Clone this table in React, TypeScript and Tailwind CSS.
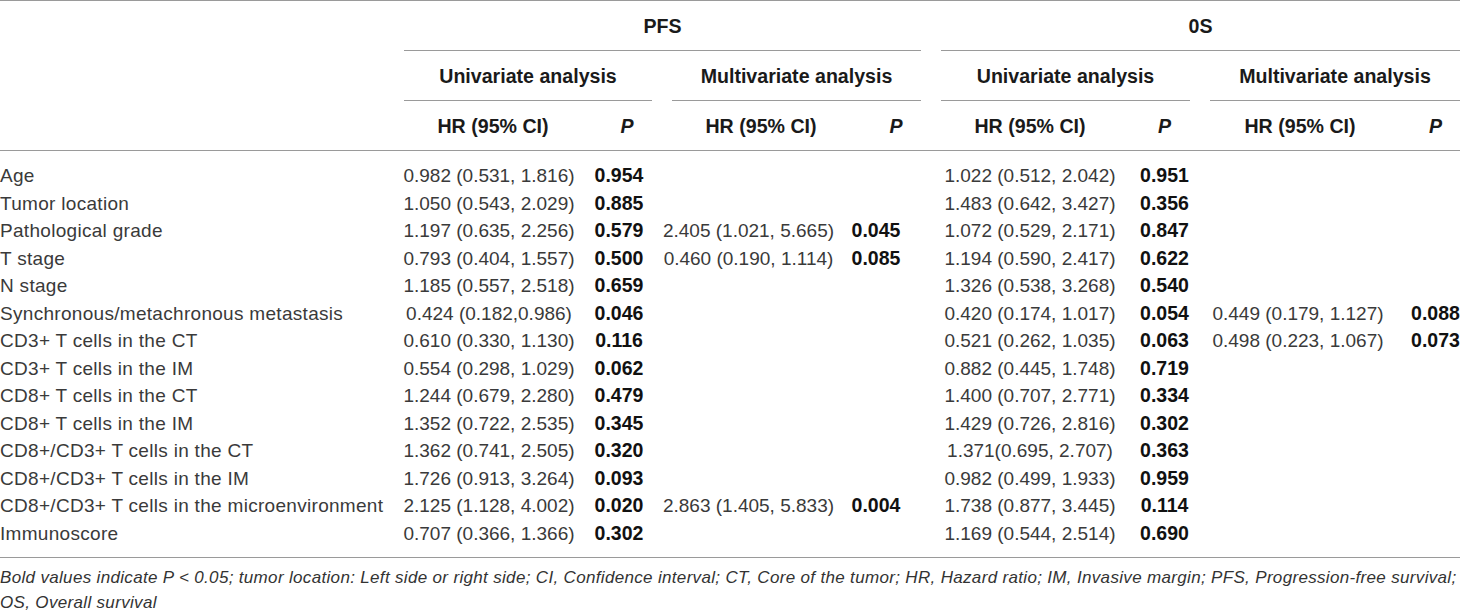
import React from "react";

type Row = {
  label: string;
  a?: string;
  ap?: string;
  b?: string;
  bp?: string;
  c?: string;
  cp?: string;
  d?: string;
  dp?: string;
};

const rows: Row[] = [
  { label: "Age", a: "0.982 (0.531, 1.816)", ap: "0.954", c: "1.022 (0.512, 2.042)", cp: "0.951" },
  { label: "Tumor location", a: "1.050 (0.543, 2.029)", ap: "0.885", c: "1.483 (0.642, 3.427)", cp: "0.356" },
  { label: "Pathological grade", a: "1.197 (0.635, 2.256)", ap: "0.579", b: "2.405 (1.021, 5.665)", bp: "0.045", c: "1.072 (0.529, 2.171)", cp: "0.847" },
  { label: "T stage", a: "0.793 (0.404, 1.557)", ap: "0.500", b: "0.460 (0.190, 1.114)", bp: "0.085", c: "1.194 (0.590, 2.417)", cp: "0.622" },
  { label: "N stage", a: "1.185 (0.557, 2.518)", ap: "0.659", c: "1.326 (0.538, 3.268)", cp: "0.540" },
  { label: "Synchronous/metachronous metastasis", a: "0.424 (0.182,0.986)", ap: "0.046", c: "0.420 (0.174, 1.017)", cp: "0.054", d: "0.449 (0.179, 1.127)", dp: "0.088" },
  { label: "CD3+ T cells in the CT", a: "0.610 (0.330, 1.130)", ap: "0.116", c: "0.521 (0.262, 1.035)", cp: "0.063", d: "0.498 (0.223, 1.067)", dp: "0.073" },
  { label: "CD3+ T cells in the IM", a: "0.554 (0.298, 1.029)", ap: "0.062", c: "0.882 (0.445, 1.748)", cp: "0.719" },
  { label: "CD8+ T cells in the CT", a: "1.244 (0.679, 2.280)", ap: "0.479", c: "1.400 (0.707, 2.771)", cp: "0.334" },
  { label: "CD8+ T cells in the IM", a: "1.352 (0.722, 2.535)", ap: "0.345", c: "1.429 (0.726, 2.816)", cp: "0.302" },
  { label: "CD8+/CD3+ T cells in the CT", a: "1.362 (0.741, 2.505)", ap: "0.320", c: "1.371(0.695, 2.707)", cp: "0.363" },
  { label: "CD8+/CD3+ T cells in the IM", a: "1.726 (0.913, 3.264)", ap: "0.093", c: "0.982 (0.499, 1.933)", cp: "0.959" },
  { label: "CD8+/CD3+ T cells in the microenvironment", a: "2.125 (1.128, 4.002)", ap: "0.020", b: "2.863 (1.405, 5.833)", bp: "0.004", c: "1.738 (0.877, 3.445)", cp: "0.114" },
  { label: "Immunoscore", a: "0.707 (0.366, 1.366)", ap: "0.302", c: "1.169 (0.544, 2.514)", cp: "0.690" },
];

const GRID =
  "grid grid-cols-[394px_190px_78px_178px_91px_198px_71px_196px_74px]";

function HeaderSubRow() {
  const hc = "h-[49px] pt-[2px] flex items-center justify-center whitespace-nowrap";
  return (
    <div className={`${GRID} border-b border-[#9a9a9a]`}>
      <div className="h-[49px]" />
      <div className={`${hc} pl-[8px]`}>HR (95% CI)</div>
      <div className={`${hc} pl-[8px] italic`}>P</div>
      <div className={`${hc} pl-[20px]`}>HR (95% CI)</div>
      <div className={`${hc} pl-[21px] italic`}>P</div>
      <div className={hc}>HR (95% CI)</div>
      <div className={`${hc} italic`}>P</div>
      <div className={`${hc} pl-[4px]`}>HR (95% CI)</div>
      <div className={`${hc} pl-[5px] italic`}>P</div>
    </div>
  );
}

function DataRow({ r }: { r: Row }) {
  const num = "h-[27.5px] flex items-center justify-center whitespace-nowrap text-[#3a3a3a]";
  const p = "h-[27.5px] flex items-center justify-center whitespace-nowrap font-bold text-[19.5px] text-[#111]";
  return (
    <div className={GRID}>
      <div className="h-[27.5px] flex items-center whitespace-nowrap text-[#3a3a3a] tracking-[0.3px]">
        {r.label}
      </div>
      <div className={num}>{r.a}</div>
      <div className={`${p} pr-[8px]`}>{r.ap}</div>
      <div className={`${num} pr-[5px]`}>{r.b}</div>
      <div className={`${p} pr-[19px]`}>{r.bp}</div>
      <div className={num}>{r.c}</div>
      <div className={p}>{r.cp}</div>
      <div className={num}>{r.d}</div>
      <div className={`${p} pl-[5px]`}>{r.dp}</div>
    </div>
  );
}

export default function App() {
  return (
    <div className="w-[1460px] h-[612px] overflow-hidden bg-white font-['Liberation_Sans',Arial,sans-serif]">
      <div className="w-[1470px] text-[19px] leading-none">
        <div className="border-t border-[#9a9a9a] font-bold text-[19.6px] text-[#1a1a1a]">
          {/* Row 1 */}
          <div className="grid grid-cols-[394px_537px_539px]">
            <div className="h-[50px]" />
            <div className="mx-[10px] h-[50px] pt-[3px] border-b border-[#9a9a9a] flex items-center justify-center">
              PFS
            </div>
            <div className="mx-[10px] h-[50px] pt-[3px] border-b border-[#9a9a9a] flex items-center justify-center">
              0S
            </div>
          </div>
          {/* Row 2 */}
          <div className="grid grid-cols-[394px_268px_269px_269px_270px]">
            <div className="h-[50px]" />
            {["Univariate analysis", "Multivariate analysis", "Univariate analysis", "Multivariate analysis"].map(
              (t, i) => (
                <div
                  key={i}
                  className="mx-[10px] h-[50px] pt-[2px] border-b border-[#9a9a9a] flex items-center justify-center whitespace-nowrap"
                >
                  {t}
                </div>
              )
            )}
          </div>
          {/* Row 3 */}
          <HeaderSubRow />
        </div>
        <div className="pt-[11px] pb-[10px] border-b border-[#9a9a9a]">
          {rows.map((r, i) => (
            <DataRow key={i} r={r} />
          ))}
        </div>
      </div>
      <div className="pt-[7px] text-[17px] leading-[25px] italic text-[#333] tracking-[0.33px]">
        <div className="whitespace-nowrap">
          Bold values indicate P &lt; 0.05; tumor location: Left side or right side; CI, Confidence interval; CT, Core of the tumor; HR, Hazard ratio; IM, Invasive margin; PFS, Progression-free survival;
        </div>
        <div className="whitespace-nowrap">OS, Overall survival</div>
      </div>
    </div>
  );
}
